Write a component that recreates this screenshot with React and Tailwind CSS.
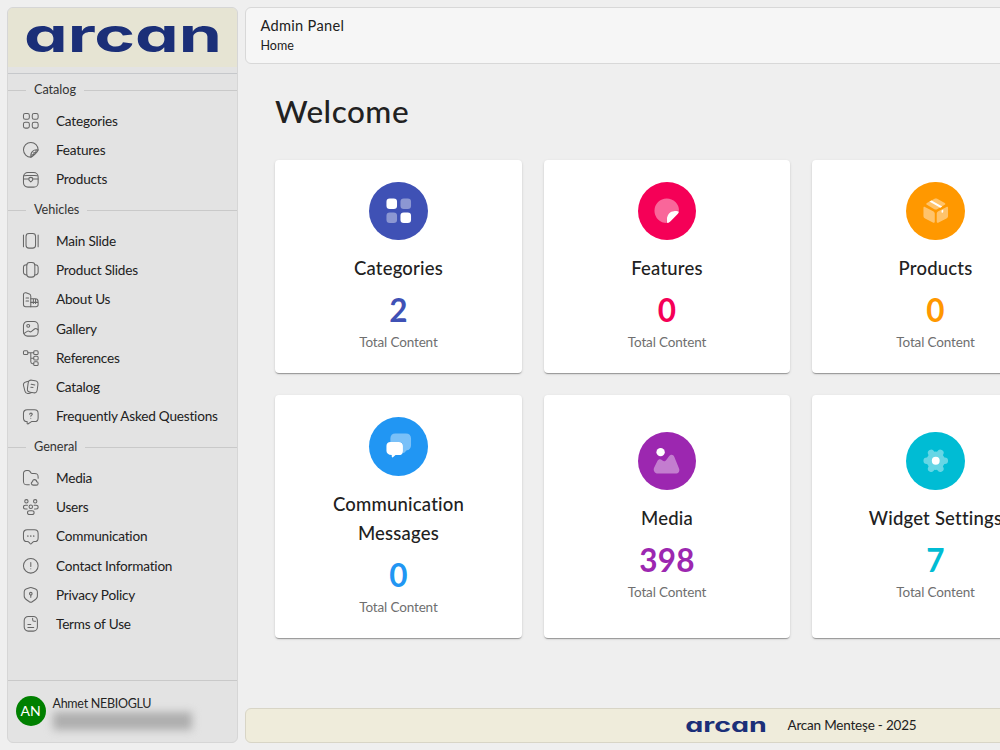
// src/App.jsx - Admin dashboard
const Icon = ({ children }) => (
  <svg viewBox="0 0 24 24" className="h-[17.6px] w-[17.6px] shrink-0 text-[#666]" fill="none" stroke="currentColor" strokeWidth="1.4" strokeLinecap="round" strokeLinejoin="round">
    {children}
  </svg>
);

const icons = {
  categories: (
    <>
      <rect x="2" y="2" width="8" height="8" rx="2.5" />
      <rect x="14" y="2" width="8" height="8" rx="2.5" />
      <rect x="2" y="14" width="8" height="8" rx="2.5" />
      <rect x="14" y="14" width="8" height="8" rx="2.5" />
    </>
  ),
  features: (
    <>
      <path d="M12.2 22A10 10 0 1 1 22 12.2" />
      <path d="M22 12.2C16 11 11 15 12.2 22 14.500 21.500 21.500 15 22 12.2ZM12.500 19C15 19.500 17 18 16.200 15.800 18 16.500 19.500 15 19.200 12.500" />
    </>
  ),
  products: (
    <>
      <rect x="2" y="2" width="20" height="20" rx="6" />
      <path d="M2 11h7.500M14.500 11H22M9.500 9.500c1.500-1 3.500-1 5 0v3L12 15l-2.500-2.500zM3 6.500c1-.5 2-.500 4-.5h10c2 0 3 0 4 .5" />
    </>
  ),
  mainSlide: (
    <>
      <rect x="5.500" y="2" width="13" height="20" rx="4" />
      <path d="M2 4v16M22 4v16" />
    </>
  ),
  productSlide: (
    <>
      <rect x="6.500" y="2" width="11" height="20" rx="4" />
      <path d="M6.500 5C3 5 2 6 2 9v6c0 3 1 4 4.500 4M17.500 5c3.500 0 4.500 1 4.500 4v6c0 3-1 4-4.500 4" />
    </>
  ),
  about: (
    <>
      <path d="M12 21.500H5c-2 0-3-1-3-3V5c0-2 1.500-3 3.500-2.500L10 4c1.500.5 2 1.500 2 3zM5.500 9.500H9M5.500 13.500H9" />
      <path d="M12 10.500h6c2.500 0 4 1.500 4 4v4c0 2-1 3-3 3h-7M12 15.500h10M15.500 11v6M18.500 11v6" />
    </>
  ),
  gallery: (
    <>
      <rect x="2" y="2" width="20" height="20" rx="5.500" />
      <circle cx="8.500" cy="8" r="2" />
      <path d="M2.500 18.500 7 15.500c1-.7 2.200-.6 3 .1.900.8 2 .8 3 0l4-3.300c1-.8 2.500-.8 3.500 0L22 13.500" />
    </>
  ),
  references: (
    <>
      <rect x="2" y="2.500" width="6" height="5" rx="1.500" />
      <rect x="16" y="2.500" width="6" height="5" rx="1.500" />
      <rect x="16" y="10" width="6" height="5" rx="1.500" />
      <rect x="16" y="17.500" width="6" height="5" rx="1.500" />
      <path d="M8 5h8M12 5v12.500c0 1.700.8 2.500 2.500 2.500H16M12 12.500h4" />
    </>
  ),
  catalog: (
    <>
      <path d="m21.700 9.200-1 7.200c-.4 3-2 4.200-5 3.800l-4.500-.7c-3-.4-4.200-2-3.800-5l1-7.500c.5-3 2-4.500 5-4l4.500.7c3 .4 4.200 2.500 3.800 5.500Z" />
      <path d="M9 4.500c-1 0-2.500.4-4 1-2.800.9-3.600 2.600-2.800 5.400l1.800 7c.8 2.800 2.600 3.900 5.400 3.100l4-1.100M12.500 8.500l5 1M12 12.500l3 .6" />
    </>
  ),
  faq: (
    <>
      <path d="M7 2.500h10c3 0 5 2 5 5v6c0 3-2 5-5 5h-4L8.500 21.500c-.7.5-1.500 0-1.500-.8v-2.200c-3 0-5-2-5-5v-6c0-3 2-5 5-5Z" />
      <path d="M10.500 8.500c0-2 3.500-2 3.500 0 0 1.200-2 1.500-2 2.800M12 14v.1" />
    </>
  ),
  media: (
    <>
      <path d="M10 21.500H7c-4 0-5-1-5-5V6.500c0-3 1.200-4.500 4.500-4.500h1.700c1.400 0 1.900.4 2.600 1.300l1.400 2c.4.500.7.700 1.800.7h3c4 0 5 1 5 5v1.500" />
      <path d="M15.500 22h4c1.500 0 2.500-1 2.500-2.300s-1-2.200-2-2.200c0-4-6-4-5.500 0-3 .5-2 4.500 1 4.500Z" />
    </>
  ),
  users: (
    <>
      <circle cx="6" cy="4.500" r="2.300" />
      <circle cx="18" cy="4.500" r="2.300" />
      <circle cx="12" cy="12" r="2.400" />
      <path d="M7.500 10H5c-4 0-4 5 0 5h2M16.500 10H19c4 0 4 5 0 5h-2M10.500 17.500h3c4 0 4 5 0 5h-3c-4 0-4-5 0-5Z" />
    </>
  ),
  communication: (
    <>
      <path d="M7 2.500h10c3 0 5 2 5 5v6c0 3-2 5-5 5-1.200 0-2 .2-2.700 1.200l-1.200 1.500c-.7.900-1.500.9-2.200 0l-1.200-1.500c-.7-1-1.500-1.200-2.700-1.200-3 0-5-2-5-5v-6c0-3 2-5 5-5Z" />
      <path d="M8 11v.1M12 11v.1M16 11v.1" strokeWidth="2" />
    </>
  ),
  info: (
    <>
      <circle cx="12" cy="12" r="10" />
      <path d="M12 7.500V13M12 16v.1" />
    </>
  ),
  privacy: (
    <>
      <path d="m10.500 2.300-5 1.900C4 4.800 3 6.200 3 8v6c0 3.500 3.500 5 7 7.500 1.200.8 2.800.8 4 0 3.500-2.500 7-4 7-7.500V8c0-1.800-1-3.200-2.500-3.800l-5-1.900c-1-.4-2-.4-3 0Z" />
      <circle cx="12" cy="10.500" r="1.800" />
      <path d="M12 12.500v3" />
    </>
  ),
  terms: (
    <>
      <rect x="3" y="2" width="18" height="20" rx="5.500" />
      <path d="M14.500 4.500v2c0 1.100.9 2 2 2h2M8 13h4M8 17h8" />
    </>
  ),
};

const sections = [
  {
    title: 'Catalog',
    items: [
      ['Categories', 'categories'],
      ['Features', 'features'],
      ['Products', 'products'],
    ],
  },
  {
    title: 'Vehicles',
    items: [
      ['Main Slide', 'mainSlide'],
      ['Product Slides', 'productSlide'],
      ['About Us', 'about'],
      ['Gallery', 'gallery'],
      ['References', 'references'],
      ['Catalog', 'catalog'],
      ['Frequently Asked Questions', 'faq'],
    ],
  },
  {
    title: 'General',
    items: [
      ['Media', 'media'],
      ['Users', 'users'],
      ['Communication', 'communication'],
      ['Contact Information', 'info'],
      ['Privacy Policy', 'privacy'],
      ['Terms of Use', 'terms'],
    ],
  },
];

const cards = [
  {
    title: 'Categories',
    count: 2,
    bg: 'bg-[#3f51b5]',
    text: 'text-[#3f51b5]',
    icon: (
      <>
        <rect x="2" y="2" width="8.600" height="8.600" rx="2.700" />
        <rect x="13.400" y="13.400" width="8.600" height="8.600" rx="2.700" />
        <g opacity=".4">
          <rect x="13.400" y="2" width="8.600" height="8.600" rx="2.700" />
          <rect x="2" y="13.400" width="8.600" height="8.600" rx="2.700" />
        </g>
      </>
    ),
  },
  {
    title: 'Features',
    count: 0,
    bg: 'bg-[#f50057]',
    text: 'text-[#f50057]',
    icon: (
      <>
        <path opacity=".4" d="M22 12A10 10 0 1 0 12 22L12.200 19C12.200 15 15 12.300 18.800 12.300Z" />
        <path d="M21.800 13.200c-.3.600-.8 1.300-1.300 1.800l-5.400 5.600c-.7.600-1.300 1.100-2.100 1.400-.5.200-.8-.2-.8-.8v-2.600c0-3.700 2.700-6.400 6.400-6.400.9 0 1.800.1 2.600.3.500.1.700.3.600.7Z" />
      </>
    ),
  },
  {
    title: 'Products',
    count: 0,
    bg: 'bg-[#ff9800]',
    text: 'text-[#ff9800]',
    icon: (
      <>
        <g opacity=".42">
          <path d="M11 2.300c.7-.4 1.500-.4 2.200 0l6.100 3.400c.7.400.7 1.100 0 1.500l-6.200 3.500c-.7.400-1.500.4-2.200 0L4.800 7.200c-.7-.4-.7-1.100 0-1.500Z" />
          <path d="M3.200 9 9.900 12.400c.8.400 1.300 1.100 1.300 2V20.700c0 1-.7 1.400-1.500.9L3.300 18.300C2.500 17.900 2 17.200 2 16.300V9.800c0-.8.500-1.200 1.200-.8Z" />
          <path d="m20.800 9-6.700 3.400c-.8.400-1.300 1.100-1.300 2V20.700c0 1 .7 1.400 1.500.9l6.400-3.300c.8-.4 1.300-1.100 1.300-2V9.800c0-.8-.5-1.200-1.200-.8Z" />
        </g>
        <path d="m8.600 3.700 8.700 4.900-1.600.9-8.900-5ZM16.700 11.700l1.400-.7v1.800c0 .7-1.400 1.300-1.400.3Z" />
      </>
    ),
  },
  {
    title: 'Communication Messages',
    count: 0,
    bg: 'bg-[#2196f3]',
    text: 'text-[#2196f3]',
    icon: (
      <>
        <path opacity=".4" d="M9.200 2h8.600C20.500 2 22 3.600 22 6v5.500c0 2.400-1.500 4-3.500 4.200l-2 1.900c-.6.500-1.200.3-1.200-.5V11.500c0-1.700-1-2.600-2.700-2.600H5.200V6c0-2.400 1.500-4 4-4Z" />
        <path d="M5.200 8.900h6.900c2 0 3.300 1.200 3.300 3.200v4.300c0 2-1.300 3.200-3.300 3.200H9.400l-2.100 1.700c-.5.400-1 .1-1-.5v-1.300c-2.700-.1-4.300-1.400-4.300-3.300V12.100c0-2 1.300-3.200 3.200-3.200Z" />
      </>
    ),
  },
  {
    title: 'Media',
    count: 398,
    bg: 'bg-[#9c27b0]',
    text: 'text-[#9c27b0]',
    icon: (
      <>
        <circle cx="7" cy="5" r="3.400" />
        <path opacity=".4" d="M1.800 17.500 4.400 12.200c.8-1.600 2.700-1.700 3.800-.7 1.400 1.300 2.600 1.300 3.700-.5l1.800-2.500c1.400-2 3.600-1.800 4.500.4l3.700 9.100c1 2.400-.3 4.400-2.800 4.400H4.700c-2.400 0-4.100-2.500-2.900-4.900Z" />
      </>
    ),
  },
  {
    title: 'Widget Settings',
    count: 7,
    bg: 'bg-[#00bcd4]',
    text: 'text-[#00bcd4]',
    icon: (
      <>
        <g opacity=".4" stroke="#fff" strokeWidth="5.400" strokeLinecap="round">
          <circle cx="12" cy="12" r="7.500" stroke="none" />
          <path d="M4.700 12h14.600M8.300 5.600l7.400 12.800M15.700 5.600 8.300 18.400" />
        </g>
        <circle cx="12" cy="12" r="3.200" />
      </>
    ),
  },
];

const Logo = ({ className }) => (
  <svg viewBox="0 0 194 28" className={`overflow-visible ${className}`} role="img">
    <text x="-2" y="27.500" fontSize="47" fontWeight="700" fill="#1b2f78" textLength="198" lengthAdjust="spacingAndGlyphs" className="font-['Inter',sans-serif] [font-feature-settings:'cv11']">
      arcan
    </text>
  </svg>
);

const Section = ({ title, items }) => (
  <section>
    <div className="flex h-[32.300px] items-center text-[12.700px]">
      <span className="h-px w-[18px] bg-[#c9c9c9]" />
      <h2 className="px-2 pb-px tracking-[-0.050px] text-[#333]">{title}</h2>
      <span className="h-px flex-1 bg-[#c9c9c9]" />
    </div>
    <ul>
      {items.map(([label, icon]) => (
        <li key={label} className="flex h-[29.250px] items-center gap-[16.200px] pl-[14.200px] text-[13.600px] tracking-[-0.210px]">
          <Icon>{icons[icon]}</Icon>
          {label}
        </li>
      ))}
    </ul>
  </section>
);

const Sidebar = () => (
  <aside className="flex w-[231px] shrink-0 flex-col rounded-md border border-[#d6d6d6] bg-[#e3e3e3]">
    <div className="flex h-[59px] shrink-0 justify-center rounded-t-[5px] bg-[#e6e4d3] pt-[16px]">
      <Logo className="h-7 w-[194px]" />
    </div>
    <nav className="mt-1.5 flex-1 border-t border-[#c6c8cb]">
      {sections.map((s) => (
        <Section key={s.title} {...s} />
      ))}
    </nav>
    <div className="flex h-[62px] shrink-0 items-center gap-[7px] border-t border-[#c9c9c9] pb-[2px] pl-[7.500px]">
      <div className="flex h-[30px] w-[30px] items-center justify-center rounded-full bg-[#008000] text-[14px] text-white">AN</div>
      <div className="pt-1">
        <p className="text-[12.500px] leading-4 tracking-[-0.280px]">Ahmet NEBIOGLU</p>
        <div className="h-[18px] w-[139px] bg-[#aeaeae] blur-[4px]" />
      </div>
    </div>
  </aside>
);

const Card = ({ title, count, bg, text, icon }) => (
  <div className="flex flex-col items-center justify-center rounded bg-white px-[22px] py-[21.500px] text-center shadow-[0_2px_1px_-1px_rgba(0,0,0,0.2),0_1px_1px_rgba(0,0,0,0.14),0_1px_3px_rgba(0,0,0,0.12)]">
    <div className={`flex h-[58.600px] w-[58.600px] items-center justify-center rounded-full ${bg}`}>
      <svg viewBox="0 0 24 24" className="h-[29.500px] w-[29.500px]" fill="#fff">
        {icon}
      </svg>
    </div>
    <h3 className="mt-[14.300px] text-[18.500px] leading-[29.250px] font-medium tracking-[0.2px]">{title}</h3>
    <p className={`mt-[7.300px] text-[31.500px] leading-[39px] font-bold tracking-[0.2px] ${text}`}>{count}</p>
    <p className="mt-[2px] text-[13.500px] leading-5 tracking-[-0.150px] text-[#6f6f6f]">Total Content</p>
  </div>
);

export default function App() {
  return (
    <div className="flex h-[750px] w-[1000px] gap-[7px] overflow-hidden bg-[#efefef] py-[7px] pl-[7px] font-['Lato',sans-serif] text-[#212121]">
      <Sidebar />
      <main className="flex w-[1112px] shrink-0 flex-col">
        <header className="h-[57px] shrink-0 rounded-md border border-[#d8d8d8] bg-[#f6f6f6] px-[14.500px] pt-2">
          <p className="text-[14.600px] leading-5 tracking-[0.3px]">Admin Panel</p>
          <p className="text-[12.500px] leading-[19px]">Home</p>
        </header>
        <div className="flex-1 pt-[27px] pr-[29.500px] pl-[30px]">
          <h1 className="text-[31.500px] leading-[40px] font-medium tracking-[0.500px]">Welcome</h1>
          <div className="mt-[29px] grid grid-cols-4 gap-x-[21.600px] gap-y-[22px]">
            {cards.slice(0, 3).map((c) => (
              <Card key={c.title} {...c} />
            ))}
            {cards.slice(3).map((c, i) => (
              <div key={c.title} className={i === 0 ? 'col-start-1 grid' : 'grid'}>
                <Card {...c} />
              </div>
            ))}
          </div>
        </div>
        <footer className="flex h-[35px] shrink-0 items-center justify-center gap-[22px] rounded-md border border-[#d8d5c6] bg-[#efecdb] pb-px">
          <Logo className="mt-0.5 h-3 w-20" />
          <span className="text-[13.500px] tracking-[-0.200px]">Arcan Menteşe - 2025</span>
        </footer>
      </main>
    </div>
  );
}
